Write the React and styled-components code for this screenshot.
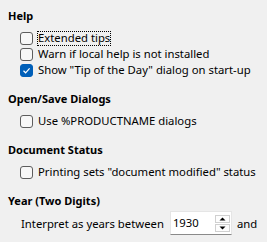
import React from 'react';
import styled, { createGlobalStyle } from 'styled-components';

const GlobalStyle = createGlobalStyle`
  html, body {
    margin: 0;
    padding: 0;
    background: #f0f0f0;
  }
  body {
    font-family: "Noto Sans", "Open Sans", sans-serif;
    font-size: 11.3px;
    color: #000;
  }
`;

const Page = styled.div`
  width: 267px;
  height: 242px;
  overflow: hidden;
  box-sizing: border-box;
  padding: 8px 0 0 8px;
  background: #f0f0f0;
  display: flex;
  flex-direction: column;
  gap: 14px;
`;

const Section = styled.section`
  display: flex;
  flex-direction: column;
`;

const Heading = styled.div`
  font-weight: 700;
  font-size: 11px;
  line-height: 16px;
  height: 16px;
  margin-bottom: ${(p) => p.$gap || 5}px;
  white-space: nowrap;
`;

const Row = styled.label`
  display: flex;
  align-items: flex-start;
  height: 16px;
  padding-left: 12px;
  white-space: nowrap;
`;

const Box = styled.span`
  box-sizing: border-box;
  width: 13px;
  height: 13px;
  margin-top: 3px;
  border-radius: 3px;
  border: 1px solid ${(p) => (p.$checked ? '#005fb8' : '#5d5d5d')};
  background: ${(p) => (p.$checked ? '#005fb8' : '#f7f7f7')};
  display: flex;
  align-items: center;
  justify-content: center;
  flex-shrink: 0;
`;

const Label = styled.span`
  margin-left: 4px;
  margin-top: 2px;
  padding: 0 1px;
  box-sizing: border-box;
  line-height: 14px;
  height: 15px;
  outline: ${(p) => (p.$focused ? '1px dotted #000' : 'none')};
  outline-offset: -1px;
`;

const SpinRow = styled.div`
  display: flex;
  align-items: center;
  padding-left: 13px;
  height: 24px;
  white-space: nowrap;
`;

const Spin = styled.div`
  margin-left: 6px;
  width: 62px;
  height: 24px;
  box-sizing: border-box;
  background: #fff;
  border: 1px solid #e5e5e5;
  border-bottom: 1px solid #8a8a8a;
  display: flex;
  align-items: center;
  justify-content: space-between;
  padding: 0 1px 0 2px;
`;

const SpinValue = styled.span`
  line-height: 16px;
`;

const SpinButtons = styled.div`
  display: flex;
  flex-direction: column;
  gap: 1px;
`;

const SpinButton = styled.div`
  width: 15px;
  height: 8px;
  box-sizing: border-box;
  border: 1px solid #d0d0d0;
  background: #fdfdfd;
  display: flex;
  align-items: center;
  justify-content: center;
`;

const After = styled.span`
  margin-left: 5px;
`;

function CheckMark() {
  return (
    <svg width="9" height="9" viewBox="0 0 9 9">
      <path d="M1.5 4.8 L3.6 6.8 L7.6 2.3" fill="none" stroke="#fff" strokeWidth="1.2" />
    </svg>
  );
}

function Check({ checked, focused, children }) {
  return (
    <Row>
      <Box $checked={checked}>{checked && <CheckMark />}</Box>
      <Label $focused={focused}>{children}</Label>
    </Row>
  );
}

function Arrow({ up }) {
  return (
    <svg width="7" height="4" viewBox="0 0 7 4">
      <path d={up ? 'M0.5 3.5 L3.5 0.5 L6.5 3.5 Z' : 'M0.5 0.5 L3.5 3.5 L6.5 0.5 Z'} fill="#000" />
    </svg>
  );
}

export default function App() {
  return (
    <>
      <GlobalStyle />
      <Page>
        <Section>
          <Heading>Help</Heading>
          <Check focused>Extended tips</Check>
          <Check>Warn if local help is not installed</Check>
          <Check checked>Show "Tip of the Day" dialog on start-up</Check>
        </Section>
        <Section>
          <Heading>Open/Save Dialogs</Heading>
          <Check>Use %PRODUCTNAME dialogs</Check>
        </Section>
        <Section>
          <Heading>Document Status</Heading>
          <Check>Printing sets "document modified" status</Check>
        </Section>
        <Section>
          <Heading $gap={2}>Year (Two Digits)</Heading>
          <SpinRow>
            Interpret as years between
            <Spin>
              <SpinValue>1930</SpinValue>
              <SpinButtons>
                <SpinButton><Arrow up /></SpinButton>
                <SpinButton><Arrow /></SpinButton>
              </SpinButtons>
            </Spin>
            <After>and</After>
          </SpinRow>
        </Section>
      </Page>
    </>
  );
}
